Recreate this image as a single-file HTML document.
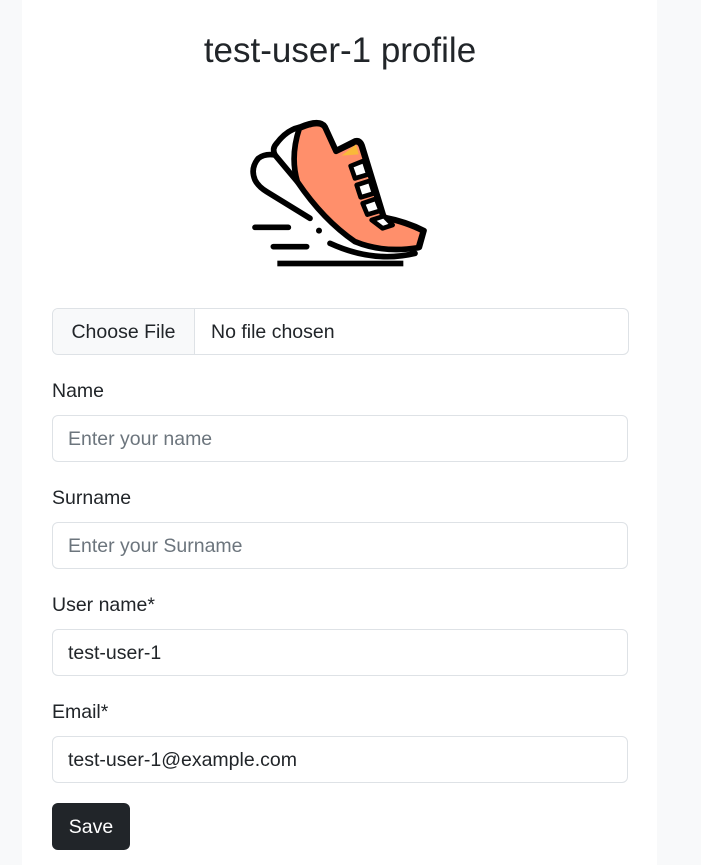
<!DOCTYPE html>
<html style="overflow:hidden;height:865px"><head><meta charset="utf-8"><style>
body{margin:0;background:#f8f9fa;width:701px;height:865px;overflow:hidden;font-family:"Liberation Sans",sans-serif;color:#212529;position:relative}
.card{position:absolute;left:22px;top:-10px;width:635px;height:875px;background:#fff;border-radius:10px 10px 0 0}
h1{position:absolute;left:0;width:680px;top:29px;margin:0;text-align:center;font-weight:400;font-size:35px;line-height:44px}
.in{position:absolute;left:52px;height:45px;border:1px solid #dee2e6;border-radius:6px;background:#fff;font-size:19.5px;line-height:47px;padding-left:15px;width:559px}
.ph{color:#6c757d}
.lb{position:absolute;left:52px;font-size:19.5px;line-height:24px}
.file{position:absolute;left:52px;top:308px;width:575px;height:45px;border:1px solid #dee2e6;border-radius:6px;overflow:hidden;font-size:19.5px;line-height:47px}
.file .b{position:absolute;left:0;top:0;width:141px;height:45px;background:#f8f9fa;border-right:1px solid #dee2e6;text-align:center}
.file .t{position:absolute;left:158px}
.btn{position:absolute;left:52px;top:803px;width:78px;height:47px;background:#212529;color:#fff;border-radius:6px;font-size:19.5px;line-height:49px;text-align:center}
</style></head><body>
<div class="card"></div>
<h1>test-user-1 profile</h1>
<svg style="position:absolute;left:240px;top:110px" width="200" height="170" viewBox="0 0 600 510">
<path d="M45,150 Q30,190 60,225 L330,420 Q420,450 525,430 L540,400 L175,215 L105,135 Q60,135 45,150Z" fill="#fff"/>
<g stroke="#000" stroke-width="17" stroke-linejoin="round" stroke-linecap="round" fill="none">
<path d="M105,135 Q75,130 55,145 Q30,175 45,210 Q55,230 80,245 L210,325"/>
<path d="M270,400 Q400,460 525,430"/>
<path d="M110,100 Q140,60 178,52" />
<path d="M105,135 Q95,115 110,100" />
<path d="M178,52 Q240,25 255,50 L288,122 L345,93 Q362,88 368,112 L432,322 Q500,335 552,362 L538,412" fill="#ff8f6b"/>
<path d="M178,55 Q240,28 255,52 L288,124 L346,96 Q360,92 366,114 L430,322 Q500,337 550,363 L535,413 Q430,430 345,395 Q250,330 172,215 Q150,140 178,55Z" fill="#ff8f6b"/>
<path d="M105,135 L172,215" />
<path d="M45,352 H145 M100,410 H200"/>
</g>
<path d="M305,137 L348,103 L356,133 Z" fill="#f9b93a"/>
<g stroke="#000" stroke-width="14" stroke-linejoin="round" fill="#fff">
<path d="M332,168 L372,152 L385,193 L345,205 Z"/>
<path d="M350,225 L390,212 L402,250 L362,262 Z"/>
<path d="M368,280 L408,266 L422,302 L382,314 Z"/>
<path d="M395,330 L432,318 L458,345 L428,355 Z"/>
</g>
<circle cx="237" cy="362" r="9" fill="#000"/>
<rect x="112" y="452" width="378" height="17" fill="#000"/>
</svg>
<div class="file"><div class="b">Choose File</div><div class="t">No file chosen</div></div>
<div class="lb" style="top:379px">Name</div>
<div class="in" style="top:415px"><span class="ph">Enter your name</span></div>
<div class="lb" style="top:486px">Surname</div>
<div class="in" style="top:522px"><span class="ph">Enter your Surname</span></div>
<div class="lb" style="top:593px">User name*</div>
<div class="in" style="top:629px">test-user-1</div>
<div class="lb" style="top:700px">Email*</div>
<div class="in" style="top:736px">test-user-1@example.com</div>
<div class="btn">Save</div>
</body></html>
